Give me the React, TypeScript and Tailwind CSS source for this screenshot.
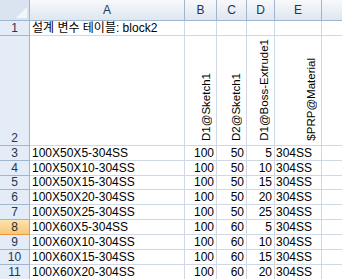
import React from 'react';

const cols = ['A', 'B', 'C', 'D', 'E', ''];
const rowHeights = [15, 15, 14, 15, 15, 15, 15, 15, 15];

const data: [string, number, number, number, string][] = [
  ['100X50X5-304SS', 100, 50, 5, '304SS'],
  ['100X50X10-304SS', 100, 50, 10, '304SS'],
  ['100X50X15-304SS', 100, 50, 15, '304SS'],
  ['100X50X20-304SS', 100, 50, 20, '304SS'],
  ['100X50X25-304SS', 100, 50, 25, '304SS'],
  ['100X60X5-304SS', 100, 60, 5, '304SS'],
  ['100X60X10-304SS', 100, 60, 10, '304SS'],
  ['100X60X15-304SS', 100, 60, 15, '304SS'],
  ['100X60X20-304SS', 100, 60, 20, '304SS'],
];

const vertical = ['D1@Sketch1', 'D2@Sketch1', 'D1@Boss-Extrude1', '$PRP@Material'];

const grid = 'border-r border-b border-[#d0d7e5]';
const font = { fontFamily: '"Liberation Sans", "Noto Sans CJK KR", sans-serif' };

function RowHead({ n, h, active }: { n: number; h: number; active?: boolean }) {
  return (
    <div
      className={`flex items-end justify-center border-r border-b text-[12px] leading-[14px] ${
        active
          ? 'bg-gradient-to-b from-[#fbe3b0] to-[#f5c977] border-[#f29536] text-[#2a2a2a]'
          : 'bg-[#e4ecf7] border-[#9eb6ce] text-[#213555]'
      }`}
      style={{ height: h }}
    >
      {n}
    </div>
  );
}

export default function App() {
  return (
    <div className="w-[342px] h-[279px] overflow-hidden bg-white text-black" style={font}>
      <div className="grid grid-cols-[30px_155px_32px_30px_28px_47px_40px]">
        {/* corner */}
        <div className="h-[21px] bg-[#dae4f1] border-r border-b border-[#9eb6ce] relative">
          <svg className="absolute right-[2px] bottom-[2px]" width="11" height="11" viewBox="0 0 11 11">
            <polygon points="11,0 11,11 0,11" fill="#f3f6fa" />
          </svg>
        </div>
        {cols.map((c, i) => (
          <div
            key={i}
            className="h-[21px] flex items-center justify-center bg-gradient-to-b from-[#f7f9fc] to-[#dfe6ef] border-r border-b border-[#9eb6ce] text-[12px] text-[#213555]"
          >
            {c}
          </div>
        ))}

        {/* row 1 */}
        <RowHead n={1} h={15} />
        <div className={`${grid} h-[15px] flex items-end pl-[2px] text-[12px] leading-[14px] whitespace-nowrap overflow-visible z-10`}>
          설계 변수 테이블: block2
        </div>
        {[0, 1, 2, 3, 4].map((i) => (
          <div key={i} className={`${grid} h-[15px]`} />
        ))}

        {/* row 2 */}
        <RowHead n={2} h={110} />
        <div className={`${grid} h-[110px]`} />
        {vertical.map((t, i) => (
          <div key={i} className={`${grid} h-[110px] flex items-end justify-end pr-[3px] pb-[4px] overflow-hidden`}>
            <span className="[writing-mode:vertical-rl] rotate-180 text-[11.5px] leading-[13px] whitespace-nowrap">
              {t}
            </span>
          </div>
        ))}
        <div className={`${grid} h-[110px]`} />

        {/* data rows */}
        {data.map((r, i) => {
          const h = rowHeights[i];
          return (
            <React.Fragment key={i}>
              <RowHead n={i + 3} h={h} active={i === 5} />
              <div className={`${grid} flex items-end pl-[2px] text-[12px] leading-[14px] whitespace-nowrap`} style={{ height: h }}>
                {r[0]}
              </div>
              <div className={`${grid} flex items-end justify-end pr-[2px] text-[12px] leading-[14px]`} style={{ height: h }}>
                {r[1]}
              </div>
              <div className={`${grid} flex items-end justify-end pr-[2px] text-[12px] leading-[14px]`} style={{ height: h }}>
                {r[2]}
              </div>
              <div className={`${grid} flex items-end justify-end pr-[2px] text-[12px] leading-[14px]`} style={{ height: h }}>
                {r[3]}
              </div>
              <div className={`${grid} flex items-end pl-[1px] text-[12px] leading-[14px]`} style={{ height: h }}>
                {r[4]}
              </div>
              <div className={grid} style={{ height: h }} />
            </React.Fragment>
          );
        })}
      </div>
    </div>
  );
}
